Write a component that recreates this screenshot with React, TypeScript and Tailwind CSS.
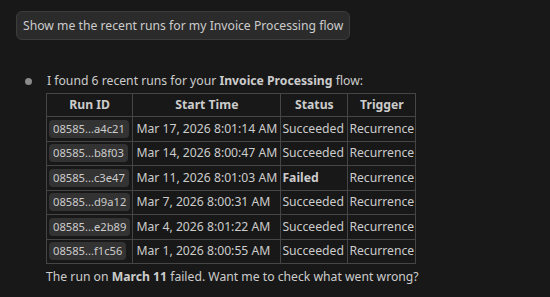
import React from "react";

const runs = [
  { id: "08585...a4c21", start: "Mar 17, 2026 8:01:14 AM", status: "Succeeded" },
  { id: "08585...b8f03", start: "Mar 14, 2026 8:00:47 AM", status: "Succeeded" },
  { id: "08585...c3e47", start: "Mar 11, 2026 8:01:03 AM", status: "Failed" },
  { id: "08585...d9a12", start: "Mar 7, 2026 8:00:31 AM", status: "Succeeded" },
  { id: "08585...e2b89", start: "Mar 4, 2026 8:01:22 AM", status: "Succeeded" },
  { id: "08585...f1c56", start: "Mar 1, 2026 8:00:55 AM", status: "Succeeded" },
];

const App = () => {
  return (
    <div className="w-[550px] h-[297px] bg-[#181818] text-[#cccccc] text-[12.2px] font-['Noto_Sans',sans-serif] overflow-hidden">
      <div className="pt-[11px] pl-4">
        <div className="inline-block bg-[#2b2b2b] border border-[#3c3c3c] rounded-md px-[6px] h-[29px] leading-[27px]">
          Show me the recent runs for my Invoice Processing flow
        </div>
      </div>

      <div className="flex pl-[25px] mt-[31px]">
        <div className="w-[7px] h-[7px] rounded-full bg-[#8b8b8b] mt-[7px] mr-[14px]" />
        <div>
          <p className="leading-[20px] ml-[1px]">
            I found 6 recent runs for your <b className="font-bold">Invoice Processing</b> flow:
          </p>
          <table className="border-collapse mt-[2px]">
            <thead>
              <tr className="h-[23px]">
                <th className="border border-[#454545] w-[85px] font-bold text-center">Run ID</th>
                <th className="border border-[#454545] w-[148px] font-bold text-center">Start Time</th>
                <th className="border border-[#454545] w-[67px] font-bold text-center">Status</th>
                <th className="border border-[#454545] w-[68px] font-bold text-center">Trigger</th>
              </tr>
            </thead>
            <tbody>
              {runs.map((r) => (
                <tr key={r.id} className="h-[24.5px]">
                  <td className="border border-[#454545] px-[2px]">
                    <span className="inline-block bg-[#333333] rounded px-[4px] h-[18px] leading-[18px] text-[11.2px] whitespace-nowrap">
                      {r.id}
                    </span>
                  </td>
                  <td className="border border-[#454545] px-[3px] whitespace-nowrap">{r.start}</td>
                  <td className={"border border-[#454545] px-[1px] whitespace-nowrap " + (r.status === "Failed" ? "font-bold" : "")}>
                    {r.status}
                  </td>
                  <td className="border border-[#454545] px-[1px] whitespace-nowrap">Recurrence</td>
                </tr>
              ))}
            </tbody>
          </table>
          <p className="mt-[3px] leading-[20px]">
            The run on <b className="font-bold">March 11</b> failed. Want me to check what went wrong?
          </p>
        </div>
      </div>
    </div>
  );
};

export default App;
